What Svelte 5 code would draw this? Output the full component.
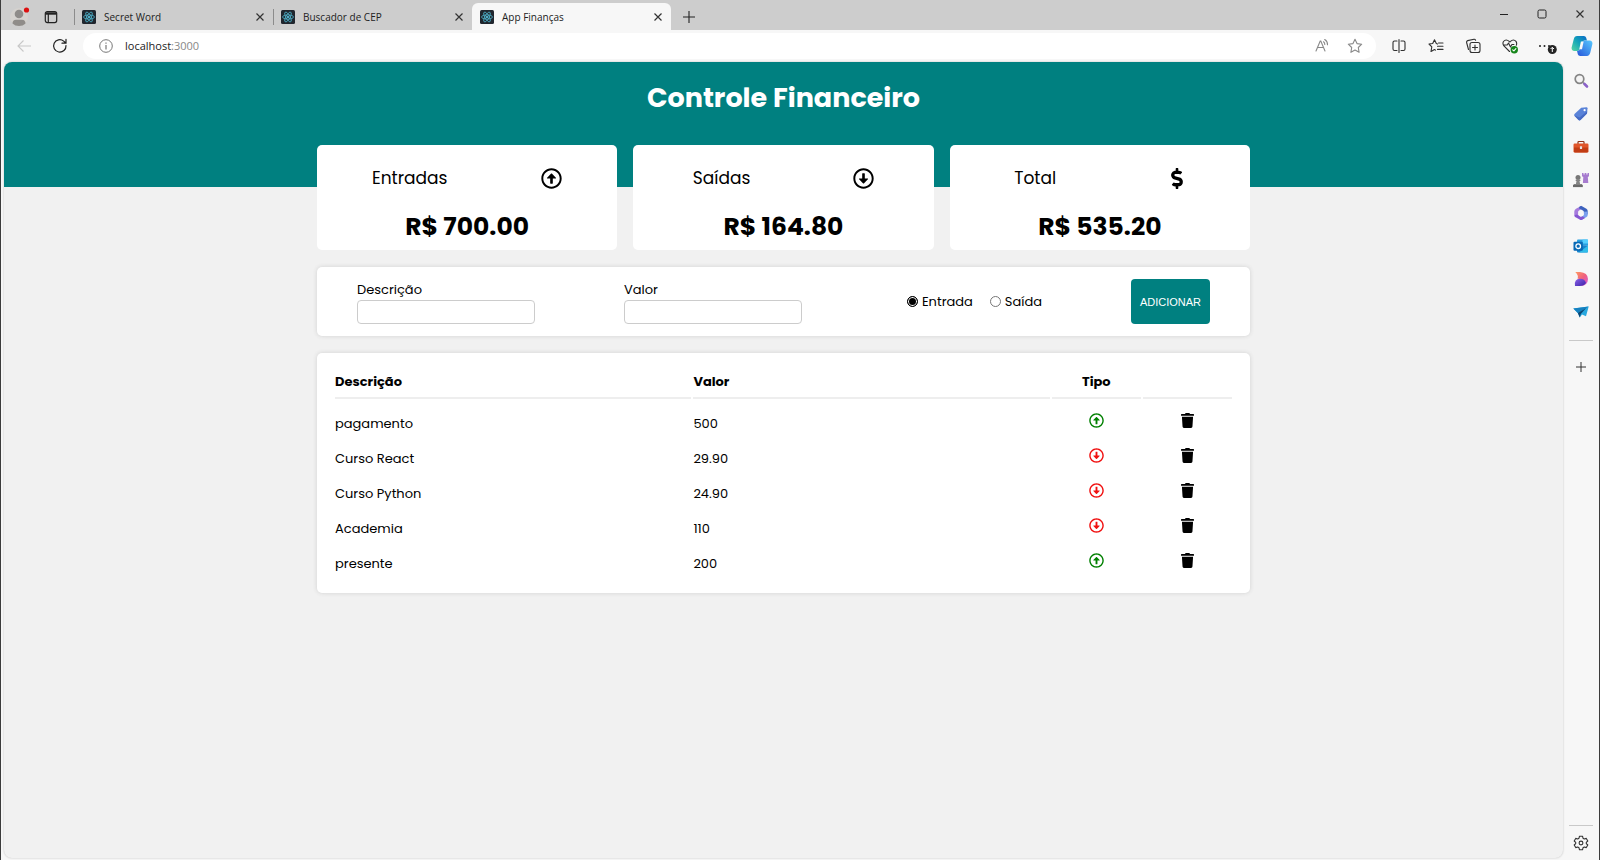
<script>
  let items = $state([
    { id: 1, desc: 'pagamento', amount: '500', expense: false },
    { id: 2, desc: 'Curso React', amount: '29.90', expense: true },
    { id: 3, desc: 'Curso Python', amount: '24.90', expense: true },
    { id: 4, desc: 'Academia', amount: '110', expense: true },
    { id: 5, desc: 'presente', amount: '200', expense: false }
  ]);
  let desc = $state('');
  let amount = $state('');
  let kind = $state('in');

  const sum = (list) => list.reduce((acc, i) => acc + Number(i.amount), 0);
  let income = $derived(sum(items.filter((i) => !i.expense)));
  let expense = $derived(sum(items.filter((i) => i.expense)));
  let cards = $derived([
    { title: 'Entradas', icon: 'up', value: income },
    { title: 'Saídas', icon: 'down', value: expense },
    { title: 'Total', icon: 'dollar', value: income - expense }
  ]);

  function add(event) {
    event.preventDefault();
    if (!desc || !(Number(amount) > 0)) return;
    items.push({ id: Date.now(), desc, amount, expense: kind === 'out' });
    desc = '';
    amount = '';
  }
  function remove(id) {
    items = items.filter((i) => i.id !== id);
  }

  const tabs = ['Secret Word', 'Buscador de CEP', 'App Finanças'];
  const tools = ['split', 'favorites', 'collections', 'health', 'more'];
  const sidebar = ['search', 'tag', 'toolbox', 'games', 'office', 'outlook', 'designer', 'drop'];
</script>

{#snippet arrow(down)}
  <svg class="arrow" viewBox="0 0 512 512" fill="currentColor" aria-hidden="true">
    <path transform={down ? 'rotate(180 256 256)' : undefined} d="M256 504c137 0 248-111 248-248S393 8 256 8 8 119 8 256s111 248 248 248zm0-448c110.500 0 200 89.500 200 200s-89.500 200-200 200S56 366.500 56 256 145.500 56 256 56zm20 328h-40c-6.600 0-12-5.400-12-12V256h-67c-10.700 0-16-12.900-8.500-20.500l99-99c4.700-4.700 12.300-4.700 17 0l99 99c7.600 7.600 2.200 20.500-8.500 20.500h-67v116c0 6.600-5.400 12-12 12z" />
  </svg>
{/snippet}

{#snippet cross()}
  <svg viewBox="0 0 10 10" width="10" height="10" fill="none" stroke="#333" aria-hidden="true"><path d="M1.500 1.500l7 7M8.500 1.500l-7 7" stroke-width="1.200" /></svg>
{/snippet}

{#snippet toolIcon(name)}
  <svg viewBox="0 0 16 16" width="16" height="16" fill="none" stroke="#303030" stroke-width="1.100" stroke-linejoin="round" stroke-linecap="round" aria-hidden="true">
    {#if name === 'split'}
      <path d="M6 3H3.500Q2 3 2 4.500v6.500Q2 12.500 3.500 12.500H6M10 3h2.500Q14 3 14 4.500v6.500q0 1.500-1.500 1.500H10M8 1.500v13" />
    {:else if name === 'favorites'}
      <path d="M9.500 6L8.300 5.500 6.500 1.800 4.700 5.500 1 6l2.800 2.800L3 13.500l3.500-2 1 .6M10.500 5H15M9.500 8.200H15M9.500 11.400H15" />
    {:else if name === 'collections'}
      <rect x="5" y="4.500" width="10" height="10" rx="2" />
      <path d="M10 7v5M7.500 9.500h5M3.500 11.500L1.600 4.500Q1.300 3 2.700 2.600L9 1.300q1.200-.2 1.600 1" />
    {:else if name === 'health'}
      <path d="M7.500 13.500L1.700 7.600Q.3 5.500 1.500 3.500 4 .6 7.200 3.400l.6.6.7-.6q3-2.800 5.500 0 1.200 2 .3 3.800M2 7h3.200l1.300-2 2 4 1.400-2.500h2" />
      <circle cx="12.300" cy="11.700" r="3.700" fill="#16861b" stroke="none" />
      <path d="M10.700 11.800l1.200 1.100 2-2.200" stroke="#fff" />
    {/if}
  </svg>
{/snippet}

{#snippet sideIcon(name)}
  <svg viewBox="0 0 16 16" width="16" height="16" aria-hidden="true">
    {#if name === 'search'}
      <circle cx="6.500" cy="6" r="4.300" fill="#f4f4f4" stroke="#858585" stroke-width="1.700" />
      <path d="M10 9.500l1.500 1.500" stroke="#858585" stroke-width="1.700" />
      <path d="M11.500 11l2.500 2.500" stroke="#8b62c9" stroke-width="2.600" stroke-linecap="round" />
    {:else if name === 'tag'}
      <path d="M8.200 1.800L13.500 1.200q1 0 1 1l-.5 5.200-6.500 6.700q-1 .8-2 0L1.500 10q-.7-1 0-2z" fill="#5a83d8" />
      <path d="M1.300 9.500L5.500 14q1 .8 2 0L14 7.400l.2-2.200L6.500 11.500z" fill="#466bc4" />
      <circle cx="11.600" cy="4.200" r="1.100" fill="#fff" />
    {:else if name === 'toolbox'}
      <path d="M5 5V3.300Q5 2.500 5.800 2.500h4.400q.8 0 .8.800V5" fill="none" stroke="#8d3017" stroke-width="1.200" />
      <rect x=".5" y="4.500" width="15" height="9" rx="1.200" fill="#e0562b" />
      <path d="M1 8.500h14v3.800q0 1.200-1.200 1.200H2.200Q1 13.500 1 12.300z" fill="#c23d15" />
      <rect x="6.900" y="7.200" width="2.200" height="2.800" rx=".5" fill="#e5e5e5" />
    {:else if name === 'games'}
      <path d="M9 1h1.500v1.400h1.100V1h1.800v1.400h1.100V1H16v3.200l-1.200.8.500 6h-5.400l.4-6L9 4.200z" fill="#a77ccf" />
      <circle cx="5" cy="5.500" r="2.500" fill="#777" />
      <path d="M2.700 7.700h4.600v1.200h-.8l.6 3.100h2v2.800H.7V12h2.200l.6-3.100h-.8z" fill="#858585" />
      <path d="M0 12.900h9.800v2.200H0z" fill="#6a6a6a" />
    {:else if name === 'office'}
      <path d="M8.500.8L3 3.800Q1.300 4.800 1.300 6.500v3.500q0 1.500 1.300 2.200L5.300 11V6.800q0-.9.800-1.400L9.500 3.500z" fill="#a67bdd" />
      <path d="M7.200 1.200Q8 .7 9 1.200l4.400 2.500q1.300.8 1.300 2.300v3.500L10.700 8V6.800q0-.9-.8-1.400L6.200 3.500V2z" fill="#3c62bd" />
      <path d="M14.700 6.500V10q0 1.300-1.200 2L9 14.800q-1 .5-1.900 0l-1-1.500 3.700-2.200q.9-.5.900-1.400V6.800z" fill="#7aa0ee" />
      <path d="M1.400 10.500q.2 1 1.200 1.700l4.500 2.600q.9.500 1.900 0l3-1.800-2.500-1.700-1 .4q-.5.200-1 0L5.300 10.300 3.500 9.500z" fill="#8556d2" />
      <path d="M8 5.300l2.700 1.500v2.900L8 11.300 5.300 9.700V6.800z" fill="#f7f7f7" />
    {:else if name === 'outlook'}
      <path d="M5 1.500h9q1 0 1 1v5H4v-5q0-1 1-1z" fill="#299fe0" />
      <path d="M9.500 1.500h5.500v4H9.500z" fill="#54cfff" />
      <path d="M4 7l11 .5v6q0 1-1 1H5q-1 0-1-1z" fill="#1684ce" />
      <path d="M15 7.500L6 14.500h8q1 0 1-1z" fill="#32bdea" />
      <rect x=".5" y="3.800" width="9.300" height="9" rx="1" fill="#0869b5" />
      <circle cx="5.200" cy="8.200" r="2.300" fill="none" stroke="#fff" stroke-width="1.300" />
    {:else if name === 'designer'}
      <defs>
        <linearGradient id="da" x1="0" y1="0" x2="1" y2="1"><stop offset="0" stop-color="#ff9a62" /><stop offset=".5" stop-color="#f0617e" /><stop offset="1" stop-color="#d25be8" /></linearGradient>
        <linearGradient id="db" x1="0" y1="0" x2="1" y2="1"><stop offset="0" stop-color="#8c62e8" /><stop offset="1" stop-color="#3a22a8" /></linearGradient>
      </defs>
      <path d="M2.300 1H7Q14.700 1.500 15 8q-.2 6-6.500 7L8 8.500 4.500 7.500Q6 4.500 2.300 1z" fill="url(#da)" />
      <path d="M2 15Q.8 8 7 7.700q5 0 6 4.300-2 3-6 3z" fill="url(#db)" />
    {:else}
      <path d="M.3 4.500L15.700 2.500 13 12.200 9 10.500 6.800 13.500 4.800 9z" fill="#28a8df" />
      <path d="M.3 4.500L15.700 2.500 4.800 9z" fill="#1681c0" />
      <path d="M4.800 9l8.400-5-5.400 6-1 3.500z" fill="#0c4775" />
    {/if}
  </svg>
{/snippet}

<div class="browser">
  <header class="strip">
    <button class="icon-btn profile" aria-label="Perfil">
      <svg viewBox="0 0 22 22" width="22" height="22" aria-hidden="true">
        <circle cx="11" cy="11" r="9" fill="#d5d2ce" />
        <circle cx="11" cy="8" r="4.300" fill="#8f8c89" />
        <path d="M4.500 17.500Q4.500 13.700 8 13.700h6q3.500 0 3.500 3.800-2.500 2.500-6.500 2.500t-6.500-2.500z" fill="#8f8c89" />
        <circle cx="18.500" cy="4" r="2.600" fill="#dc1010" />
      </svg>
    </button>
    <button class="icon-btn spaces" aria-label="Espaços de trabalho">
      <svg viewBox="0 0 14 14" width="14" height="14" fill="none" stroke="#222" stroke-width="1.200" aria-hidden="true">
        <rect x="1.300" y="1.600" width="11.400" height="11" rx="2" /><path d="M1.500 3.500h11" stroke-width="2.400" /><path d="M4.300 4v8.500" />
      </svg>
    </button>
    <div class="tabs">
      {#each tabs as tab, i}
        <div class="tab" class:active={i === 2}>
          <a href="#{i}">
            <svg viewBox="0 0 14 14" width="14" height="14" aria-hidden="true">
              <rect width="14" height="14" rx="1.500" fill="#20262e" />
              <g fill="none" stroke="#4fb4cc" stroke-width=".8">
                <ellipse cx="7" cy="7" rx="5.500" ry="2.100" />
                <ellipse cx="7" cy="7" rx="5.500" ry="2.100" transform="rotate(60 7 7)" />
                <ellipse cx="7" cy="7" rx="5.500" ry="2.100" transform="rotate(120 7 7)" />
              </g>
              <circle cx="7" cy="7" r="1" fill="#61dafb" />
            </svg>
            <span>{tab}</span>
          </a>
          <button class="icon-btn" aria-label="Fechar guia">{@render cross()}</button>
        </div>
      {/each}
    </div>
    <button class="icon-btn new-tab" aria-label="Nova guia">
      <svg viewBox="0 0 12 12" width="12" height="12" stroke="#222" stroke-width="1.100" aria-hidden="true"><path d="M6 0v12M0 6h12" /></svg>
    </button>
    <div class="controls">
      <button class="icon-btn" aria-label="Minimizar"><svg viewBox="0 0 10 10" width="10" height="10" stroke="#222" aria-hidden="true"><path d="M1 5.500h8" /></svg></button>
      <button class="icon-btn" aria-label="Maximizar"><svg viewBox="0 0 10 10" width="10" height="10" stroke="#222" fill="none" aria-hidden="true"><rect x="1" y="1" width="8" height="8" rx="1.500" /></svg></button>
      <button class="icon-btn" aria-label="Fechar">{@render cross()}</button>
    </div>
  </header>

  <div class="toolbar">
    <button class="icon-btn nav" aria-label="Voltar"><svg viewBox="0 0 14 14" width="14" height="14" fill="none" stroke="#c8c8c8" stroke-width="1.100" aria-hidden="true"><path d="M14 7H1M6.500 1.500L1 7l5.500 5.500" /></svg></button>
    <button class="icon-btn nav" aria-label="Atualizar"><svg viewBox="0 0 16 16" width="16" height="16" fill="none" stroke="#222" stroke-width="1.200" stroke-linecap="round" aria-hidden="true"><path d="M14 7.500a6.200 6.200 0 1 1-2.300-4.400l1.800 1.700M14 1.300v3.900h-4" /></svg></button>
    <div class="address">
      <svg viewBox="0 0 14 14" width="14" height="14" fill="none" stroke="#777" aria-hidden="true"><circle cx="7" cy="7" r="6.300" /><path d="M7 6v4.500M7 3.500v1.300" stroke-width="1.200" /></svg>
      <div class="url" role="textbox" tabindex="0" aria-label="Endereço">localhost<span>:3000</span></div>
      <button class="icon-btn" aria-label="Ler em voz alta"><svg viewBox="0 0 16 16" width="16" height="16" fill="none" stroke="#888" stroke-width="1.100" stroke-linecap="round" aria-hidden="true"><path d="M2 13L6.200 3h.6L11 13M3.500 9.500h6M9.500 3.800q1.400 1 1.300 2.700M10.700 1.500q3 1.800 2.800 5.300" /></svg></button>
      <button class="icon-btn" aria-label="Adicionar aos favoritos"><svg viewBox="0 0 16 16" width="16" height="16" fill="none" stroke="#888" stroke-width="1.100" stroke-linejoin="round" aria-hidden="true"><path d="M8 1.300l2 4.300 4.700.6-3.400 3.300.8 4.800L8 12l-4.100 2.300.8-4.800L1.300 6.200 6 5.600z" /></svg></button>
    </div>
    <div class="tools">
      {#each tools as tool}
        <button class="icon-btn" aria-label={tool}>
          {#if tool === 'more'}
            <svg viewBox="0 0 20 16" width="20" height="16" aria-hidden="true">
              <g fill="#222"><circle cx="3" cy="8" r="1" /><circle cx="7.500" cy="8" r="1" /><circle cx="12" cy="8" r="1" /></g>
              <circle cx="15.300" cy="11.500" r="4.500" fill="#252525" /><path d="M15.300 14V9.500M13.600 11l1.700-1.700 1.700 1.700" fill="none" stroke="#fff" />
            </svg>
          {:else}
            {@render toolIcon(tool)}
          {/if}
        </button>
      {/each}
    </div>
    <button class="icon-btn copilot" aria-label="Copilot">
      <svg viewBox="0 0 20 20" width="22" height="22" aria-hidden="true">
        <defs>
          <linearGradient id="ca" x1="0" y1="1" x2="1" y2="0"><stop offset="0" stop-color="#57d6a1" /><stop offset=".5" stop-color="#14a5b9" /><stop offset="1" stop-color="#0969c8" /></linearGradient>
          <linearGradient id="cb" x1="1" y1="0" x2="0" y2="1"><stop offset="0" stop-color="#57c9ff" /><stop offset="1" stop-color="#2655d9" /></linearGradient>
        </defs>
        <path d="M5.500 1h6.200q1.600 0 2.100 1.600L14.500 5h-2.200q-1.600 0-2.100 1.600L8.300 12.500Q7.600 14.500 5.500 14.500H3Q.4 14.300.5 11.500L2.500 3.800Q3.200 1 5.500 1z" fill="url(#ca)" />
        <path d="M14.500 19H8.300q-1.600 0-2.100-1.600L5.500 14.500q2.200 0 2.800-2l1.900-5.900Q10.800 5 12.300 5H17q2.600.3 2.500 3l-2 8.200q-.7 2.800-3 2.800z" fill="url(#cb)" />
        <path d="M9 6h2.500L10 13H7.500z" fill="#f7f7f7" />
      </svg>
    </button>
  </div>

  <div class="body">
    <main class="page">
      <header class="banner"><h1>Controle Financeiro</h1></header>
      <div class="container">
        <section class="resume">
          {#each cards as card}
            <article class="card">
              <div class="card-head">
                <span>{card.title}</span>
                {#if card.icon === 'dollar'}
                  <svg class="dollar" viewBox="0 0 288 512" fill="currentColor" aria-hidden="true"><path d="M209.200 233.400l-108-31.600C88.700 198.200 80 186.500 80 173.500c0-16.300 13.200-29.500 29.500-29.500h66.300c12.200 0 24.200 3.700 34.200 10.500 6.100 4.100 14.300 3.100 19.500-2l34.800-34c7.100-6.900 6.100-18.400-1.800-24.500C238 74.800 207.400 64.100 176 64V16c0-8.800-7.200-16-16-16h-32c-8.800 0-16 7.200-16 16v48h-2.500C45.800 64-5.400 118.700.5 183.600c4.200 46.100 39.400 83.600 83.800 96.600l102.500 30c12.500 3.700 21.200 15.300 21.200 28.300 0 16.300-13.200 29.500-29.500 29.500h-66.300C100 368 88 364.300 78 357.500c-6.100-4.100-14.300-3.100-19.500 2l-34.800 34c-7.100 6.900-6.100 18.400 1.800 24.500 24.500 19.200 55.100 29.900 86.500 30v48c0 8.800 7.200 16 16 16h32c8.800 0 16-7.200 16-16v-48.200c46.600-.9 90.300-28.600 105.700-72.700 21.500-61.600-14.600-124.800-72.500-141.700z" /></svg>
                {:else}
                  {@render arrow(card.icon === 'down')}
                {/if}
              </div>
              <strong>R$ {card.value.toFixed(2)}</strong>
            </article>
          {/each}
        </section>

        <form class="panel entry" onsubmit={add}>
          <div class="field"><label for="desc">Descrição</label><input id="desc" type="text" bind:value={desc} /></div>
          <div class="field"><label for="amount">Valor</label><input id="amount" type="text" inputmode="decimal" bind:value={amount} /></div>
          <div class="radios">
            <input id="in" type="radio" name="kind" value="in" bind:group={kind} /><label for="in">Entrada</label>
            <input id="out" type="radio" name="kind" value="out" bind:group={kind} /><label for="out">Saída</label>
          </div>
          <button class="add" type="submit">ADICIONAR</button>
        </form>

        <section class="panel list">
          <table>
            <thead><tr><th class="wide">Descrição</th><th class="wide">Valor</th><th class="mid">Tipo</th><th aria-label="Excluir"></th></tr></thead>
            <tbody>
              {#each items as item (item.id)}
                <tr>
                  <td>{item.desc}</td>
                  <td>{item.amount}</td>
                  <td class="mid"><span class="kind" class:out={item.expense}>{@render arrow(item.expense)}</span></td>
                  <td class="mid">
                    <button class="icon-btn trash" aria-label="Excluir {item.desc}" onclick={() => remove(item.id)}>
                      <svg viewBox="0 0 448 512" width="13" height="15" aria-hidden="true"><path d="M432 32H312l-9.400-18.700A24 24 0 0 0 281.100 0H166.800a23.720 23.720 0 0 0-21.400 13.300L136 32H16A16 16 0 0 0 0 48v32a16 16 0 0 0 16 16h416a16 16 0 0 0 16-16V48a16 16 0 0 0-16-16zM53.200 467a48 48 0 0 0 47.900 45h245.800a48 48 0 0 0 47.900-45L416 128H32z" /></svg>
                    </button>
                  </td>
                </tr>
              {/each}
            </tbody>
          </table>
        </section>
      </div>
    </main>

    <aside class="sidebar">
      {#each sidebar as name}
        <button class="icon-btn" aria-label={name}>{@render sideIcon(name)}</button>
      {/each}
      <hr />
      <button class="icon-btn" aria-label="Personalizar"><svg viewBox="0 0 10 10" width="10" height="10" stroke="#333" aria-hidden="true"><path d="M5 0v10M0 5h10" /></svg></button>
      <hr class="last" />
      <button class="icon-btn" aria-label="Configurações">
        <svg viewBox="0 0 16 16" width="16" height="16" fill="none" stroke="#333" stroke-width="1.100" stroke-linejoin="round" aria-hidden="true">
          <path d="M6.500 1.200h3l.5 2 1.300.8 2-.6 1.500 2.600-1.500 1.400v1.200l1.500 1.400-1.500 2.600-2-.6-1.300.8-.5 2h-3l-.5-2-1.300-.8-2 .6L1.200 10l1.500-1.400V7.400L1.200 6l1.500-2.600 2 .6L6 3.200z" /><circle cx="8" cy="8" r="1.900" />
        </svg>
      </button>
    </aside>
  </div>
</div>

<style>
  :global(body) { margin: 0; }
  .browser, .browser * { box-sizing: border-box; }
  .browser {
    display: flex;
    flex-direction: column;
    min-height: 100vh;
    border: solid #3c3c3c;
    border-width: 0 1px;
    background: #f7f7f7;
    color: #222;
    font-family: "Segoe UI", "Open Sans", "Noto Sans", sans-serif;
    font-size: 10px;
  }
  svg { display: block; flex: none; }
  button { font: inherit; cursor: pointer; }
  .icon-btn {
    display: flex;
    align-items: center;
    justify-content: center;
    padding: 0;
    border: 0;
    background: none;
  }

  .strip { display: flex; height: 30px; padding: 3px 0 0 6px; background: #cdcdcd; }
  .profile { width: 24px; }
  .spaces { width: 24px; margin: 0 11px 0 8px; }
  .tabs { display: flex; }
  .tab { display: flex; align-items: center; width: 199px; padding: 0 7px 0 8px; position: relative; }
  .tab:not(.active)::before {
    content: "";
    position: absolute;
    left: 0;
    top: 6px;
    width: 1px;
    height: 16px;
    background: #8c8c8c;
  }
  .tab.active { background: #f7f7f7; border-radius: 6px 6px 0 0; }
  .tab a { display: flex; align-items: center; gap: 8px; flex: 1; color: inherit; text-decoration: none; }
  .tab .icon-btn { width: 12px; height: 16px; }
  .new-tab { width: 36px; }
  .controls { display: flex; margin-left: auto; padding-bottom: 6px; }
  .controls .icon-btn { width: 38px; }

  .toolbar { display: flex; align-items: center; height: 31px; padding-left: 5px; }
  .nav { width: 36px; height: 24px; }
  .address {
    display: flex;
    align-items: center;
    flex: 1;
    height: 26px;
    margin-left: 5px;
    padding: 0 13px 0 16px;
    border-radius: 13px;
    background: #fff;
    font-size: 11px;
  }
  .url { flex: 1; margin-left: 12px; outline: none; }
  .url span { color: #888; }
  .address .icon-btn { margin-left: 17px; }
  .tools { display: flex; padding-left: 4px; }
  .tools .icon-btn { width: 37px; height: 24px; }
  .copilot { width: 34px; height: 24px; }

  .body { display: flex; flex: 1; }
  .page {
    flex: 1;
    margin: 1px 0 2px 3px;
    border-radius: 8px;
    overflow: hidden;
    background: #f1f1f1;
    box-shadow: 0 0 2px #bbb;
    color: #000;
    font-family: Poppins, Inter, sans-serif;
    font-size: 13px;
  }
  .banner { height: 125px; padding-top: 18px; background: teal; color: #fff; text-align: center; }
  h1 { margin: 0; font-size: 27px; line-height: 36px; }
  .container { width: 933px; max-width: 96%; margin: -42px auto 0; }
  .resume { display: grid; grid-template-columns: repeat(3, 1fr); gap: 16px; }
  .card { height: 105px; padding: 19px 8px 0; border-radius: 5px; background: #fff; text-align: center; }
  .card-head { display: flex; align-items: center; justify-content: space-around; height: 28px; font-size: 17px; }
  .card strong { display: block; margin-top: 17px; font-size: 25px; line-height: 36px; }
  .card .arrow { width: 21px; height: 21px; }
  .dollar { width: 16px; height: 21px; }
  .panel { margin-top: 17px; border-radius: 5px; background: #fff; box-shadow: 0 0 4px #d0d0d0; }
  .entry { display: flex; align-items: center; justify-content: space-between; padding: 12px 40px; height: 69px; }
  .field { display: flex; flex-direction: column; width: 178px; }
  .field label { line-height: 21px; }
  .field input { width: 100%; height: 24px; padding: 4px 8px; border: 1px solid #ccc; border-radius: 4px; background: #fff; font-size: 13px; }
  .radios { display: flex; align-items: center; padding-left: 16px; }
  .radios input {
    appearance: none;
    width: 11px;
    height: 11px;
    margin: 0 4px 0 0;
    border: 1px solid #767676;
    border-radius: 50%;
    background: #fff;
  }
  .radios input:checked { border-color: #000; background: #000; box-shadow: inset 0 0 0 1px #fff; }
  .radios label + input { margin-left: 17px; }
  .add {
    width: 79px;
    height: 45px;
    padding: 0;
    border: 0;
    border-radius: 4px;
    background: teal;
    color: #fff;
    font-family: "Liberation Sans", Arial, sans-serif;
    font-size: 11px;
  }
  .list { padding: 17px 18px; }
  table { width: calc(100% + 4px); margin: 0 -2px; border-spacing: 2px; table-layout: fixed; }
  th, td { padding: 0; line-height: 20px; text-align: left; }
  th { width: 10%; padding-bottom: 5px; border-bottom: 2px solid #eee; }
  .wide { width: 40%; }
  td { height: 33px; padding-top: 13px; vertical-align: top; }
  .mid { text-align: center; }
  td.mid { padding-top: 12px; }
  .kind { display: flex; justify-content: center; color: green; }
  .kind.out { color: #f01010; }
  .kind .arrow { width: 15px; height: 15px; }
  .trash { margin: 0 auto; }

  .sidebar { display: flex; flex-direction: column; align-items: center; width: 36px; padding: 3px 0 1px; }
  .sidebar .icon-btn { width: 33px; height: 33px; }
  hr { width: 24px; height: 1px; margin: 12px 0 9px; border: 0; background: #c9c9c9; }
  hr.last { margin: auto 0 0; }
</style>
